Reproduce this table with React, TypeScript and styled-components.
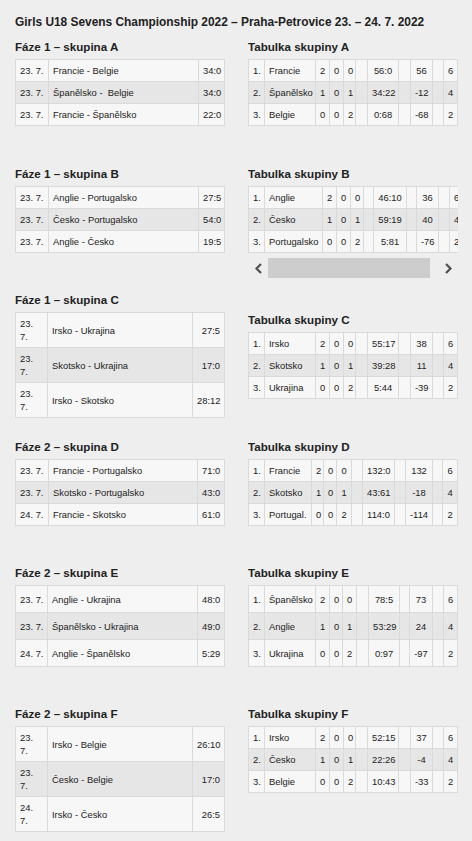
import React from "react";
import styled, { createGlobalStyle } from "styled-components";

type Match = [string, string, string];
type Standing = [string, string, string, string, string, string, string, string];

interface Group {
  phase: string;
  letter: string;
  top: number;
  align?: "start" | "center";
  matchCols: number[];
  tableCols: number[];
  padY?: number;
  wrapDate?: boolean;
  scroll?: boolean;
  matches: Match[];
  standings: Standing[];
}

const GlobalStyle = createGlobalStyle`
  html, body {
    margin: 0;
    padding: 0;
    background: #eeeeee;
  }
  body {
    font-family: "Liberation Sans", Arial, sans-serif;
    color: #222;
  }
  * {
    box-sizing: border-box;
  }
`;

const Page = styled.div`
  padding: 15px 0 10px 15px;
  min-height: 841px;
`;

const Title = styled.h1`
  margin: 0;
  font-size: 11.9px;
  line-height: 14px;
  font-weight: bold;
  color: #222;
`;

const Section = styled.section<{ $top: number; $align: string }>`
  display: grid;
  grid-template-columns: 209px 210px;
  column-gap: 24px;
  align-items: ${(p) => p.$align};
  margin-top: ${(p) => p.$top}px;
`;

const Block = styled.div`
  min-width: 0;
`;

const Heading = styled.h2`
  margin: 0 0 5px;
  font-size: 11.6px;
  line-height: 14px;
  font-weight: bold;
  color: #222;
`;

const Table = styled.table<{ $width: number }>`
  width: ${(p) => p.$width}px;
  border-collapse: collapse;
  table-layout: fixed;
  font-size: 9.4px;
  line-height: 13px;
  color: #222;
`;

const Col = styled.col<{ $w: number }>`
  width: ${(p) => p.$w}px;
`;

const Row = styled.tr`
  background: #f7f7f7;

  &:nth-child(even) {
    background: #e6e6e6;
  }
`;

const Cell = styled.td<{ $align?: string; $padY: number; $wrap?: boolean }>`
  border: 1px solid #dadada;
  padding: ${(p) => p.$padY}px 4px;
  text-align: ${(p) => p.$align ?? "left"};
  white-space: ${(p) => (p.$wrap ? "normal" : "pre")};
  overflow: hidden;
  vertical-align: middle;
`;

const Scroller = styled.div`
  width: 210px;
  overflow: hidden;
`;

const ScrollBar = styled.div`
  display: flex;
  align-items: center;
  width: 210px;
  height: 20px;
  margin-top: 5px;
`;

const ScrollButton = styled.div`
  width: 20px;
  height: 20px;
  display: flex;
  align-items: center;
  justify-content: center;
  flex: none;
`;

const Track = styled.div`
  flex: 1;
  height: 20px;
  padding-right: 8px;
`;

const Thumb = styled.div`
  width: 162px;
  height: 100%;
  background: #cdcdcd;
`;

const groups: Group[] = [
  {
    phase: "Fáze 1",
    letter: "A",
    top: 11,
    matchCols: [33, 150, 26],
    tableCols: [16, 51, 14, 14, 12, 12, 31, 12, 22, 11, 14],
    matches: [
      ["23. 7.", "Francie - Belgie", "34:0"],
      ["23. 7.", "Španělsko -  Belgie", "34:0"],
      ["23. 7.", "Francie - Španělsko", "22:0"],
    ],
    standings: [
      ["1.", "Francie", "2", "0", "0", "56:0", "56", "6"],
      ["2.", "Španělsko", "1", "0", "1", "34:22", "-12", "4"],
      ["3.", "Belgie", "0", "0", "2", "0:68", "-68", "2"],
    ],
  },
  {
    phase: "Fáze 1",
    letter: "B",
    top: 41,
    matchCols: [33, 150, 26],
    tableCols: [16, 58, 14, 14, 13, 10, 33, 10, 22, 11, 14],
    scroll: true,
    matches: [
      ["23. 7.", "Anglie - Portugalsko", "27:5"],
      ["23. 7.", "Česko - Portugalsko", "54:0"],
      ["23. 7.", "Anglie - Česko", "19:5"],
    ],
    standings: [
      ["1.", "Anglie", "2", "0", "0", "46:10", "36", "6"],
      ["2.", "Česko", "1", "0", "1", "59:19", "40", "4"],
      ["3.", "Portugalsko", "0", "0", "2", "5:81", "-76", "2"],
    ],
  },
  {
    phase: "Fáze 1",
    letter: "C",
    top: 15,
    align: "center",
    matchCols: [32, 145, 32],
    tableCols: [16, 51, 14, 14, 12, 12, 31, 12, 22, 11, 14],
    wrapDate: true,
    matches: [
      ["23. 7.", "Irsko - Ukrajina", "27:5"],
      ["23. 7.", "Skotsko - Ukrajina", "17:0"],
      ["23. 7.", "Irsko - Skotsko", "28:12"],
    ],
    standings: [
      ["1.", "Irsko", "2", "0", "0", "55:17", "38", "6"],
      ["2.", "Skotsko", "1", "0", "1", "39:28", "11", "4"],
      ["3.", "Ukrajina", "0", "0", "2", "5:44", "-39", "2"],
    ],
  },
  {
    phase: "Fáze 2",
    letter: "D",
    top: 22,
    matchCols: [33, 149, 27],
    tableCols: [16, 47, 12, 13, 15, 11, 32, 11, 27, 10, 15],
    matches: [
      ["23. 7.", "Francie - Portugalsko", "71:0"],
      ["23. 7.", "Skotsko - Portugalsko", "43:0"],
      ["24. 7.", "Francie - Skotsko", "61:0"],
    ],
    standings: [
      ["1.", "Francie", "2", "0", "0", "132:0", "132", "6"],
      ["2.", "Skotsko", "1", "0", "1", "43:61", "-18", "4"],
      ["3.", "Portugal.", "0", "0", "2", "114:0", "-114", "2"],
    ],
  },
  {
    phase: "Fáze 2",
    letter: "E",
    top: 40,
    matchCols: [32, 150, 27],
    tableCols: [16, 51, 14, 13, 14, 12, 31, 10, 23, 11, 14],
    padY: 6.5,
    matches: [
      ["23. 7.", "Anglie - Ukrajina", "48:0"],
      ["23. 7.", "Španělsko - Ukrajina", "49:0"],
      ["24. 7.", "Anglie - Španělsko", "5:29"],
    ],
    standings: [
      ["1.", "Španělsko", "2", "0", "0", "78:5", "73", "6"],
      ["2.", "Anglie", "1", "0", "1", "53:29", "24", "4"],
      ["3.", "Ukrajina", "0", "0", "2", "0:97", "-97", "2"],
    ],
  },
  {
    phase: "Fáze 2",
    letter: "F",
    top: 40,
    matchCols: [32, 145, 32],
    tableCols: [16, 51, 14, 14, 12, 12, 31, 12, 22, 11, 14],
    wrapDate: true,
    matches: [
      ["23. 7.", "Irsko - Belgie", "26:10"],
      ["23. 7.", "Česko - Belgie", "17:0"],
      ["24. 7.", "Irsko - Česko", "26:5"],
    ],
    standings: [
      ["1.", "Irsko", "2", "0", "0", "52:15", "37", "6"],
      ["2.", "Česko", "1", "0", "1", "22:26", "-4", "4"],
      ["3.", "Belgie", "0", "0", "2", "10:43", "-33", "2"],
    ],
  },
];

const sum = (cols: number[]) => cols.reduce((a, b) => a + b, 0);

const Chevron: React.FC<{ dir: "left" | "right" }> = ({ dir }) => (
  <svg width="9" height="11" viewBox="0 0 9 11">
    <polyline
      points={dir === "left" ? "7,1 2.5,5.5 7,10" : "2,1 6.5,5.5 2,10"}
      fill="none"
      stroke="#505050"
      strokeWidth="2.2"
    />
  </svg>
);

const MatchTable: React.FC<{ group: Group }> = ({ group }) => {
  const padY = group.padY ?? 4;
  return (
    <Table $width={sum(group.matchCols)}>
      <colgroup>
        {group.matchCols.map((w, i) => (
          <Col key={i} $w={w} />
        ))}
      </colgroup>
      <tbody>
        {group.matches.map(([date, teams, score]) => (
          <Row key={teams}>
            <Cell $padY={padY} $wrap={group.wrapDate}>
              {date}
            </Cell>
            <Cell $padY={padY}>{teams}</Cell>
            <Cell $padY={padY} $align="right">
              {score}
            </Cell>
          </Row>
        ))}
      </tbody>
    </Table>
  );
};

const StandingsTable: React.FC<{ group: Group }> = ({ group }) => {
  const padY = group.padY ?? 4;
  return (
    <Table $width={sum(group.tableCols)}>
      <colgroup>
        {group.tableCols.map((w, i) => (
          <Col key={i} $w={w} />
        ))}
      </colgroup>
      <tbody>
        {group.standings.map(([rank, team, w, d, l, score, diff, pts]) => (
          <Row key={team}>
            <Cell $padY={padY}>{rank}</Cell>
            <Cell $padY={padY}>{team}</Cell>
            <Cell $padY={padY} $align="center">{w}</Cell>
            <Cell $padY={padY} $align="center">{d}</Cell>
            <Cell $padY={padY} $align="center">{l}</Cell>
            <Cell $padY={padY} />
            <Cell $padY={padY} $align="center">{score}</Cell>
            <Cell $padY={padY} />
            <Cell $padY={padY} $align="center">{diff}</Cell>
            <Cell $padY={padY} />
            <Cell $padY={padY} $align="center">{pts}</Cell>
          </Row>
        ))}
      </tbody>
    </Table>
  );
};

export default function App() {
  return (
    <Page>
      <GlobalStyle />
      <Title>Girls U18 Sevens Championship 2022 – Praha-Petrovice 23. – 24. 7. 2022</Title>
      {groups.map((group) => (
        <Section key={group.letter} $top={group.top} $align={group.align ?? "start"}>
          <Block>
            <Heading>
              {group.phase} – skupina {group.letter}
            </Heading>
            <MatchTable group={group} />
          </Block>
          <Block>
            <Heading>Tabulka skupiny {group.letter}</Heading>
            <Scroller>
              <StandingsTable group={group} />
            </Scroller>
            {group.scroll && (
              <ScrollBar>
                <ScrollButton>
                  <Chevron dir="left" />
                </ScrollButton>
                <Track>
                  <Thumb />
                </Track>
                <ScrollButton>
                  <Chevron dir="right" />
                </ScrollButton>
              </ScrollBar>
            )}
          </Block>
        </Section>
      ))}
    </Page>
  );
}
